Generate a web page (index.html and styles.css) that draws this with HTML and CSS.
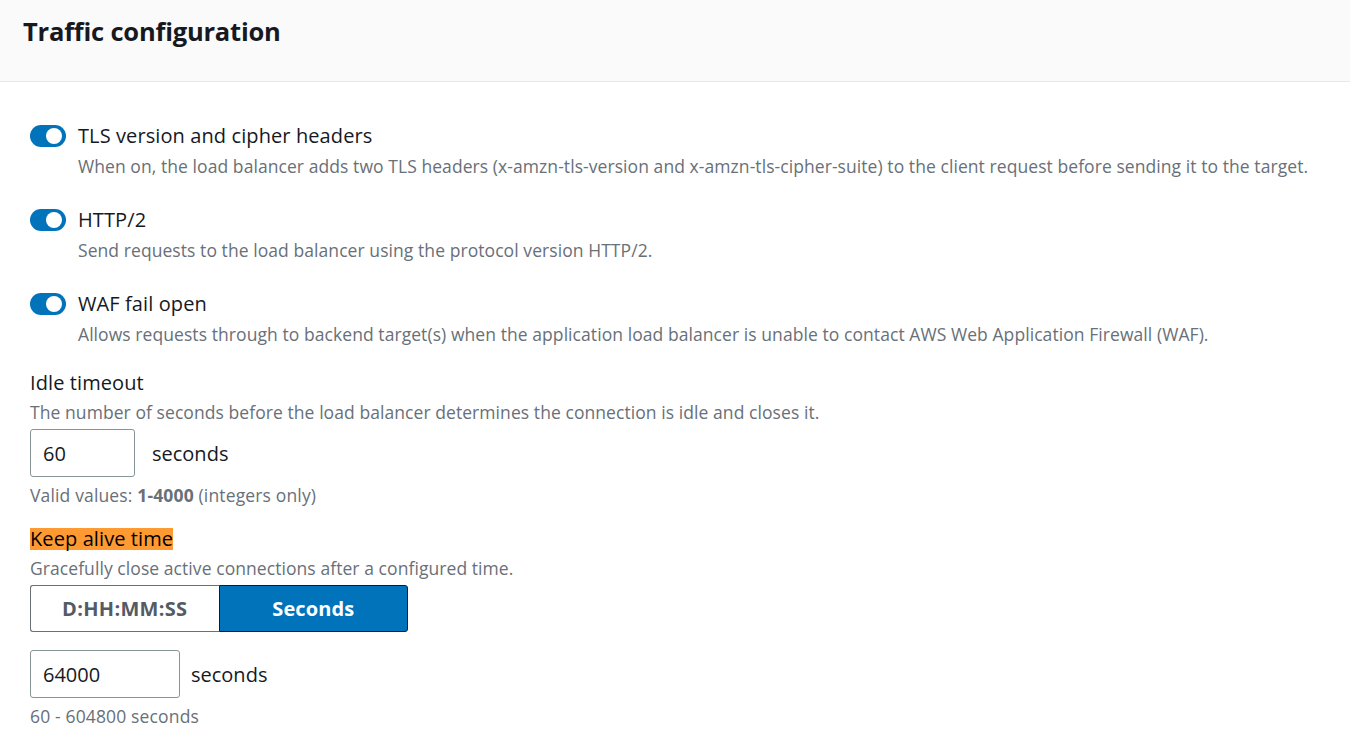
FILE: index.html
```html
<!DOCTYPE html>
<html lang="en">
<head>
<meta charset="utf-8">
<title>Traffic configuration</title>
<link rel="stylesheet" href="styles.css">
</head>
<body>
<div class="panel">
  <header class="panel-header">
    <h2 class="panel-title">Traffic configuration</h2>
  </header>
  <div class="panel-body">
    <div class="toggle-field">
      <span class="toggle"><span class="knob"></span></span>
      <div class="toggle-text">
        <div class="toggle-label">TLS version and cipher headers</div>
        <div class="desc">When on, the load balancer adds two TLS headers (x-amzn-tls-version and x-amzn-tls-cipher-suite) to the client request before sending it to the target.</div>
      </div>
    </div>
    <div class="toggle-field">
      <span class="toggle"><span class="knob"></span></span>
      <div class="toggle-text">
        <div class="toggle-label">HTTP/2</div>
        <div class="desc">Send requests to the load balancer using the protocol version HTTP/2.</div>
      </div>
    </div>
    <div class="toggle-field">
      <span class="toggle"><span class="knob"></span></span>
      <div class="toggle-text">
        <div class="toggle-label">WAF fail open</div>
        <div class="desc">Allows requests through to backend target(s) when the application load balancer is unable to contact AWS Web Application Firewall (WAF).</div>
      </div>
    </div>

    <div class="field idle">
      <div class="field-label">Idle timeout</div>
      <div class="desc">The number of seconds before the load balancer determines the connection is idle and closes it.</div>
      <div class="input-row">
        <div class="input input-short">60</div>
        <span class="unit">seconds</span>
      </div>
      <div class="hint">Valid values: <b>1-4000</b> (integers only)</div>
    </div>

    <div class="field keep">
      <div class="field-label"><span class="highlight">Keep alive time</span></div>
      <div class="desc">Gracefully close active connections after a configured time.</div>
      <div class="segmented">
        <span class="seg">D:HH:MM:SS</span>
        <span class="seg seg-active">Seconds</span>
      </div>
      <div class="input-row row2">
        <div class="input input-long">64000</div>
        <span class="unit">seconds</span>
      </div>
      <div class="hint">60 - 604800 seconds</div>
    </div>
  </div>
</div>
</body>
</html>
```

FILE: styles.css
```css
* { box-sizing: border-box; }
html, body { margin: 0; padding: 0; background: #ffffff; }
body {
  font-family: "Open Sans", "Noto Sans", Arial, sans-serif;
  color: #16191f;
  width: 1350px;
  height: 736px;
  overflow: hidden;
}
.panel-header {
  height: 82px;
  background: #fafafa;
  border-bottom: 1px solid #e6e8ea;
  padding: 15px 23px 0;
}
.panel-title {
  margin: 0;
  font-size: 25.5px;
  line-height: 32px;
  font-weight: 700;
  letter-spacing: -0.2px;
}
.panel-body {
  padding: 42px 30px 0;
}
.toggle-field {
  display: flex;
  gap: 12px;
  align-items: flex-start;
  margin-bottom: 30px;
}
.toggle {
  flex: none;
  position: relative;
  width: 36px;
  height: 22px;
  margin-top: 1px;
  border-radius: 11px;
  background: #0073bb;
}
.knob {
  position: absolute;
  right: 4px;
  top: 3px;
  width: 16px;
  height: 16px;
  border-radius: 50%;
  background: #ffffff;
}
.toggle-label, .field-label {
  font-size: 20px;
  line-height: 24px;
  letter-spacing: 0.1px;
}
.desc {
  font-size: 17.5px;
  line-height: 24px;
  letter-spacing: 0.07px;
  color: #687078;
  margin-top: 6px;
}
.field { margin-top: -5px; }
.field .desc { margin-top: 5px; }
.input-row {
  display: flex;
  align-items: center;
  gap: 17px;
  margin-top: 5px;
}
.input {
  height: 48px;
  border: 1px solid #879596;
  border-radius: 3px;
  padding: 0 12px;
  display: flex;
  align-items: center;
  font-size: 20px;
}
.input-short { width: 105px; }
.input-long { width: 150px; }
.row2 { gap: 11px; margin-top: 18px; }
.unit { font-size: 20px; }
.hint {
  font-size: 17.5px;
  line-height: 24px;
  letter-spacing: 0.15px;
  color: #687078;
  margin-top: 6px;
}
.hint b { font-weight: 700; }
.keep { margin-top: 20px; }
.highlight {
  display: inline-block;
  line-height: 22px;
  height: 22px;
  background: #ff9a33;
  color: #000000;
  vertical-align: top;
  margin-top: 1px;
}
.segmented {
  display: flex;
  margin-top: 5px;
  width: 378px;
  height: 47px;
}
.seg {
  flex: 1;
  display: flex;
  align-items: center;
  justify-content: center;
  font-size: 20px;
  font-weight: 700;
  letter-spacing: 0.3px;
  color: #545b64;
  border: 1px solid #687078;
  border-right: none;
  border-radius: 3px 0 0 3px;
}
.seg-active {
  background: #0073bb;
  color: #ffffff;
  letter-spacing: 0.1px;
  border: 1px solid #16191f;
  border-radius: 0 3px 3px 0;
}
```
